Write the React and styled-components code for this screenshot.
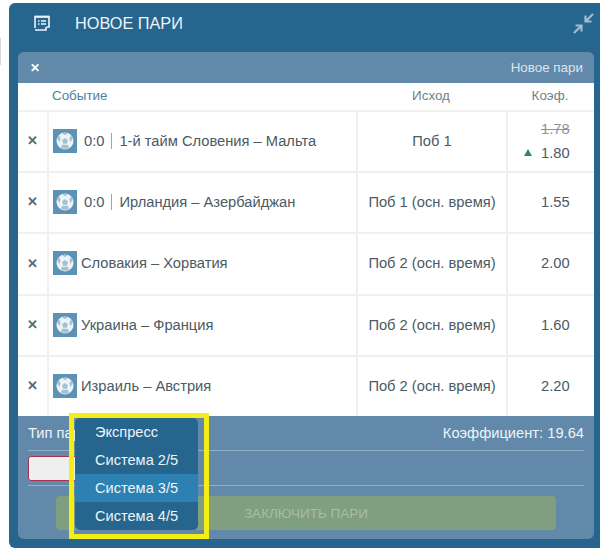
import React from 'react';
import styled, { createGlobalStyle } from 'styled-components';

const GlobalStyle = createGlobalStyle`
  html, body {
    margin: 0;
    padding: 0;
    background: #fff;
    overflow: hidden;
  }
  body {
    font-family: 'Liberation Sans', Arial, sans-serif;
  }
`;

const Page = styled.div`
  width: 600px;
  height: 549px;
  padding: 3px 0 0 9px;
  box-sizing: border-box;
  position: relative;
  overflow: hidden;
`;

const Panel = styled.div`
  width: 591px;
  height: 545px;
  background: #25658e;
  border-radius: 6px 0 0 6px;
  padding: 0 6px 0 9px;
  box-sizing: border-box;
  display: flex;
  flex-direction: column;
`;

const Header = styled.div`
  height: 49px;
  display: flex;
  align-items: center;
  padding: 0 0 9px 15px;
  box-sizing: border-box;
  color: #eef4f8;
`;

const HeaderTitle = styled.div`
  margin-left: 24px;
  font-size: 16.3px;
  flex: 1;
`;

const Inner = styled.div`
  flex: 1;
  display: flex;
  flex-direction: column;
  border-radius: 6px;
  overflow: hidden;
  margin-bottom: 9px;
  background: #6289a9;
`;

const SubHead = styled.div`
  height: 31px;
  display: flex;
  align-items: center;
  justify-content: space-between;
  padding: 0 11px 0 12px;
  color: #fff;
  background: #6289a9;
  font-size: 13.4px;
  flex: none;
`;

const SubHeadClose = styled.span`
  font-size: 12px;
  font-weight: bold;
`;

const SubHeadLabel = styled.span`
  color: #dbe6ee;
`;

const Table = styled.div`
  background: #fff;
  flex: none;
  display: grid;
  grid-template-columns: 29px 309px 150px 88px;
  grid-template-rows: 27px 61px 61px 62px 61px 61px;
`;

const HeadCell = styled.div`
  display: flex;
  align-items: center;
  justify-content: ${(p) => (p.$left ? 'flex-start' : 'center')};
  padding-left: ${(p) => (p.$left ? '5px' : '0')};
  padding-bottom: 2px;
  font-size: 13.4px;
  color: ${(p) => (p.$blue ? '#4f7f9f' : '#6f7f8a')};
`;

const Cell = styled.div`
  border-top: 2px solid #f0f0f0;
  border-left: ${(p) => (p.$first ? 'none' : '2px solid #f0f0f0')};
  box-sizing: border-box;
  display: flex;
  align-items: center;
  justify-content: ${(p) => (p.$left ? 'flex-start' : 'center')};
  padding-left: ${(p) => (p.$left ? '4px' : '0')};
  padding-bottom: 2px;
  font-size: 14.7px;
  color: #4b5a63;
`;

const OddsCell = styled(Cell)`
  flex-direction: column;
  align-items: flex-start;
  padding-left: 16px;
`;

const RemoveMark = styled.span`
  font-size: 13px;
  font-weight: bold;
  color: #5a6870;
`;

const Score = styled.span`
  margin-left: 7px;
  padding-right: 7px;
  margin-right: 7px;
  border-right: 1px solid #9aa5ac;
  line-height: 16px;
`;

const EventName = styled.span`
  margin-left: ${(p) => (p.$plain ? '4px' : '0')};
`;

const OldOdds = styled.div`
  text-decoration: line-through;
  color: #8b959b;
  margin: 0 0 8px 17px;
`;

const NewOdds = styled.div`
  display: flex;
  align-items: center;
  gap: 9px;
`;

const ArrowSlot = styled.span`
  width: 8px;
  display: flex;
`;

const UpArrow = styled.span`
  width: 0;
  height: 0;
  border-left: 4px solid transparent;
  border-right: 4px solid transparent;
  border-bottom: 7px solid #2e8b57;
`;

const Footer = styled.div`
  flex: 1;
  padding: 0 10px 9px;
  display: flex;
  flex-direction: column;
  color: #eef4f8;
  font-size: 14.7px;
`;

const FooterRow = styled.div`
  height: 34px;
  flex: none;
  display: flex;
  align-items: center;
  justify-content: space-between;
  border-bottom: 1px solid #8fb0c6;
`;

const AmountRow = styled.div`
  height: 34px;
  flex: none;
  display: flex;
  align-items: center;
  border-bottom: 1px solid #8fb0c6;
`;

const AmountInput = styled.div`
  width: 120px;
  height: 25px;
  box-sizing: border-box;
  border: 1px solid #a8324f;
  border-radius: 3px;
  background: #efefef;
`;

const SubmitButton = styled.div`
  margin: 10px 28px 0 28px;
  height: 34px;
  border-radius: 4px;
  background: #7f9f80;
  color: #a8bda8;
  font-size: 13.5px;
  display: flex;
  align-items: center;
  justify-content: center;
  flex: none;
`;

const Highlight = styled.div`
  position: absolute;
  left: 69px;
  top: 413px;
  width: 140px;
  height: 126px;
  box-sizing: border-box;
  border: 5px solid #f5ee16;
  padding-left: 1px;
`;

const Menu = styled.div`
  width: 123px;
  height: 112px;
  background: #25658e;
  border-radius: 5px;
  overflow: hidden;
`;

const MenuItem = styled.div`
  height: 28px;
  display: flex;
  align-items: center;
  padding-left: 20px;
  font-size: 14.6px;
  color: #eef4f8;
  background: ${(p) => (p.$active ? '#2c80b2' : 'transparent')};
`;

const IconTile = styled.span`
  width: 24px;
  height: 24px;
  background: #5b92b6;
  display: inline-flex;
  align-items: center;
  justify-content: center;
  flex: none;
`;

const SliverMark = styled.div`
  position: absolute;
  left: 0;
  top: 38px;
  width: 1px;
  height: 27px;
  background: #d8d8d8;
`;

const BallIcon = () => (
  <IconTile>
    <svg width="20" height="20" viewBox="0 0 20 20">
      <circle cx="10" cy="10" r="8.5" fill="#eef3f6" />
      <path d="M10 7l3 2.2-1.1 3.5H8.1L7 9.2z" fill="#a4c0d3" />
      <path d="M7.2 2.6L10 4l2.8-1.4C11 1.3 9 1.3 7.2 2.6z" fill="#a4c0d3" />
      <path d="M2.2 7.5l2.3 3.4 1-3.4-1.3-3C3.2 5.2 2.5 6.3 2.2 7.5z" fill="#a4c0d3" />
      <path d="M17.8 7.5l-2.3 3.4-1-3.4 1.3-3c1 .7 1.7 1.8 2 3z" fill="#a4c0d3" />
      <path d="M6 16.8l1-3 5.8 0 1.2 3c-2.4 1.2-5.6 1.2-8 0z" fill="#a4c0d3" />
    </svg>
  </IconTile>
);

const BetSlipIcon = () => (
  <svg width="18" height="18" viewBox="0 0 18 18" fill="none" stroke="#eef4f8">
    <path d="M2 14V2.5h14V13h-2.5" strokeWidth="1.6" />
    <path d="M2 2.8h14" strokeWidth="2" />
    <path d="M2 16h11V13" strokeWidth="1.6" />
    <path d="M5 7h1.5M5 10h1.5M8 7h5M8 10h5" strokeWidth="1.4" />
  </svg>
);

const CollapseIcon = () => (
  <svg width="21" height="21" viewBox="0 0 21 21" fill="none" stroke="#a3bccd" strokeWidth="2.2">
    <path d="M20 1l-7 7M12.5 2.5V8.5h6" />
    <path d="M1 20l7-7M2.5 12.5h6v6" />
  </svg>
);

const bets = [
  { score: '0:0', name: '1-й тайм Словения – Мальта', outcome: 'Поб 1', old: '1.78', odds: '1.80' },
  { score: '0:0', name: 'Ирландия – Азербайджан', outcome: 'Поб 1 (осн. время)', odds: '1.55' },
  { name: 'Словакия – Хорватия', outcome: 'Поб 2 (осн. время)', odds: '2.00' },
  { name: 'Украина – Франция', outcome: 'Поб 2 (осн. время)', odds: '1.60' },
  { name: 'Израиль – Австрия', outcome: 'Поб 2 (осн. время)', odds: '2.20' },
];

const menuItems = ['Экспресс', 'Система 2/5', 'Система 3/5', 'Система 4/5'];

export default function App() {
  return (
    <>
      <GlobalStyle />
      <Page>
        <SliverMark />
        <Panel>
          <Header>
            <BetSlipIcon />
            <HeaderTitle>НОВОЕ ПАРИ</HeaderTitle>
            <CollapseIcon />
          </Header>
          <Inner>
            <SubHead>
              <SubHeadClose>✕</SubHeadClose>
              <SubHeadLabel>Новое пари</SubHeadLabel>
            </SubHead>
            <Table>
              <HeadCell />
              <HeadCell $left $blue>Событие</HeadCell>
              <HeadCell>Исход</HeadCell>
              <HeadCell>Коэф.</HeadCell>
              {bets.map((bet) => (
                <React.Fragment key={bet.name}>
                  <Cell $first>
                    <RemoveMark>✕</RemoveMark>
                  </Cell>
                  <Cell $left>
                    <BallIcon />
                    {bet.score && <Score>{bet.score}</Score>}
                    <EventName $plain={!bet.score}>{bet.name}</EventName>
                  </Cell>
                  <Cell>{bet.outcome}</Cell>
                  <OddsCell>
                    {bet.old && <OldOdds>{bet.old}</OldOdds>}
                    <NewOdds>
                      <ArrowSlot>{bet.old && <UpArrow />}</ArrowSlot>
                      {bet.odds}
                    </NewOdds>
                  </OddsCell>
                </React.Fragment>
              ))}
            </Table>
            <Footer>
              <FooterRow>
                <span>Тип пари</span>
                <span>Коэффициент: 19.64</span>
              </FooterRow>
              <AmountRow>
                <AmountInput />
              </AmountRow>
              <SubmitButton>ЗАКЛЮЧИТЬ ПАРИ</SubmitButton>
            </Footer>
          </Inner>
        </Panel>
        <Highlight>
          <Menu>
            {menuItems.map((item) => (
              <MenuItem key={item} $active={item === 'Система 3/5'}>
                {item}
              </MenuItem>
            ))}
          </Menu>
        </Highlight>
      </Page>
    </>
  );
}
